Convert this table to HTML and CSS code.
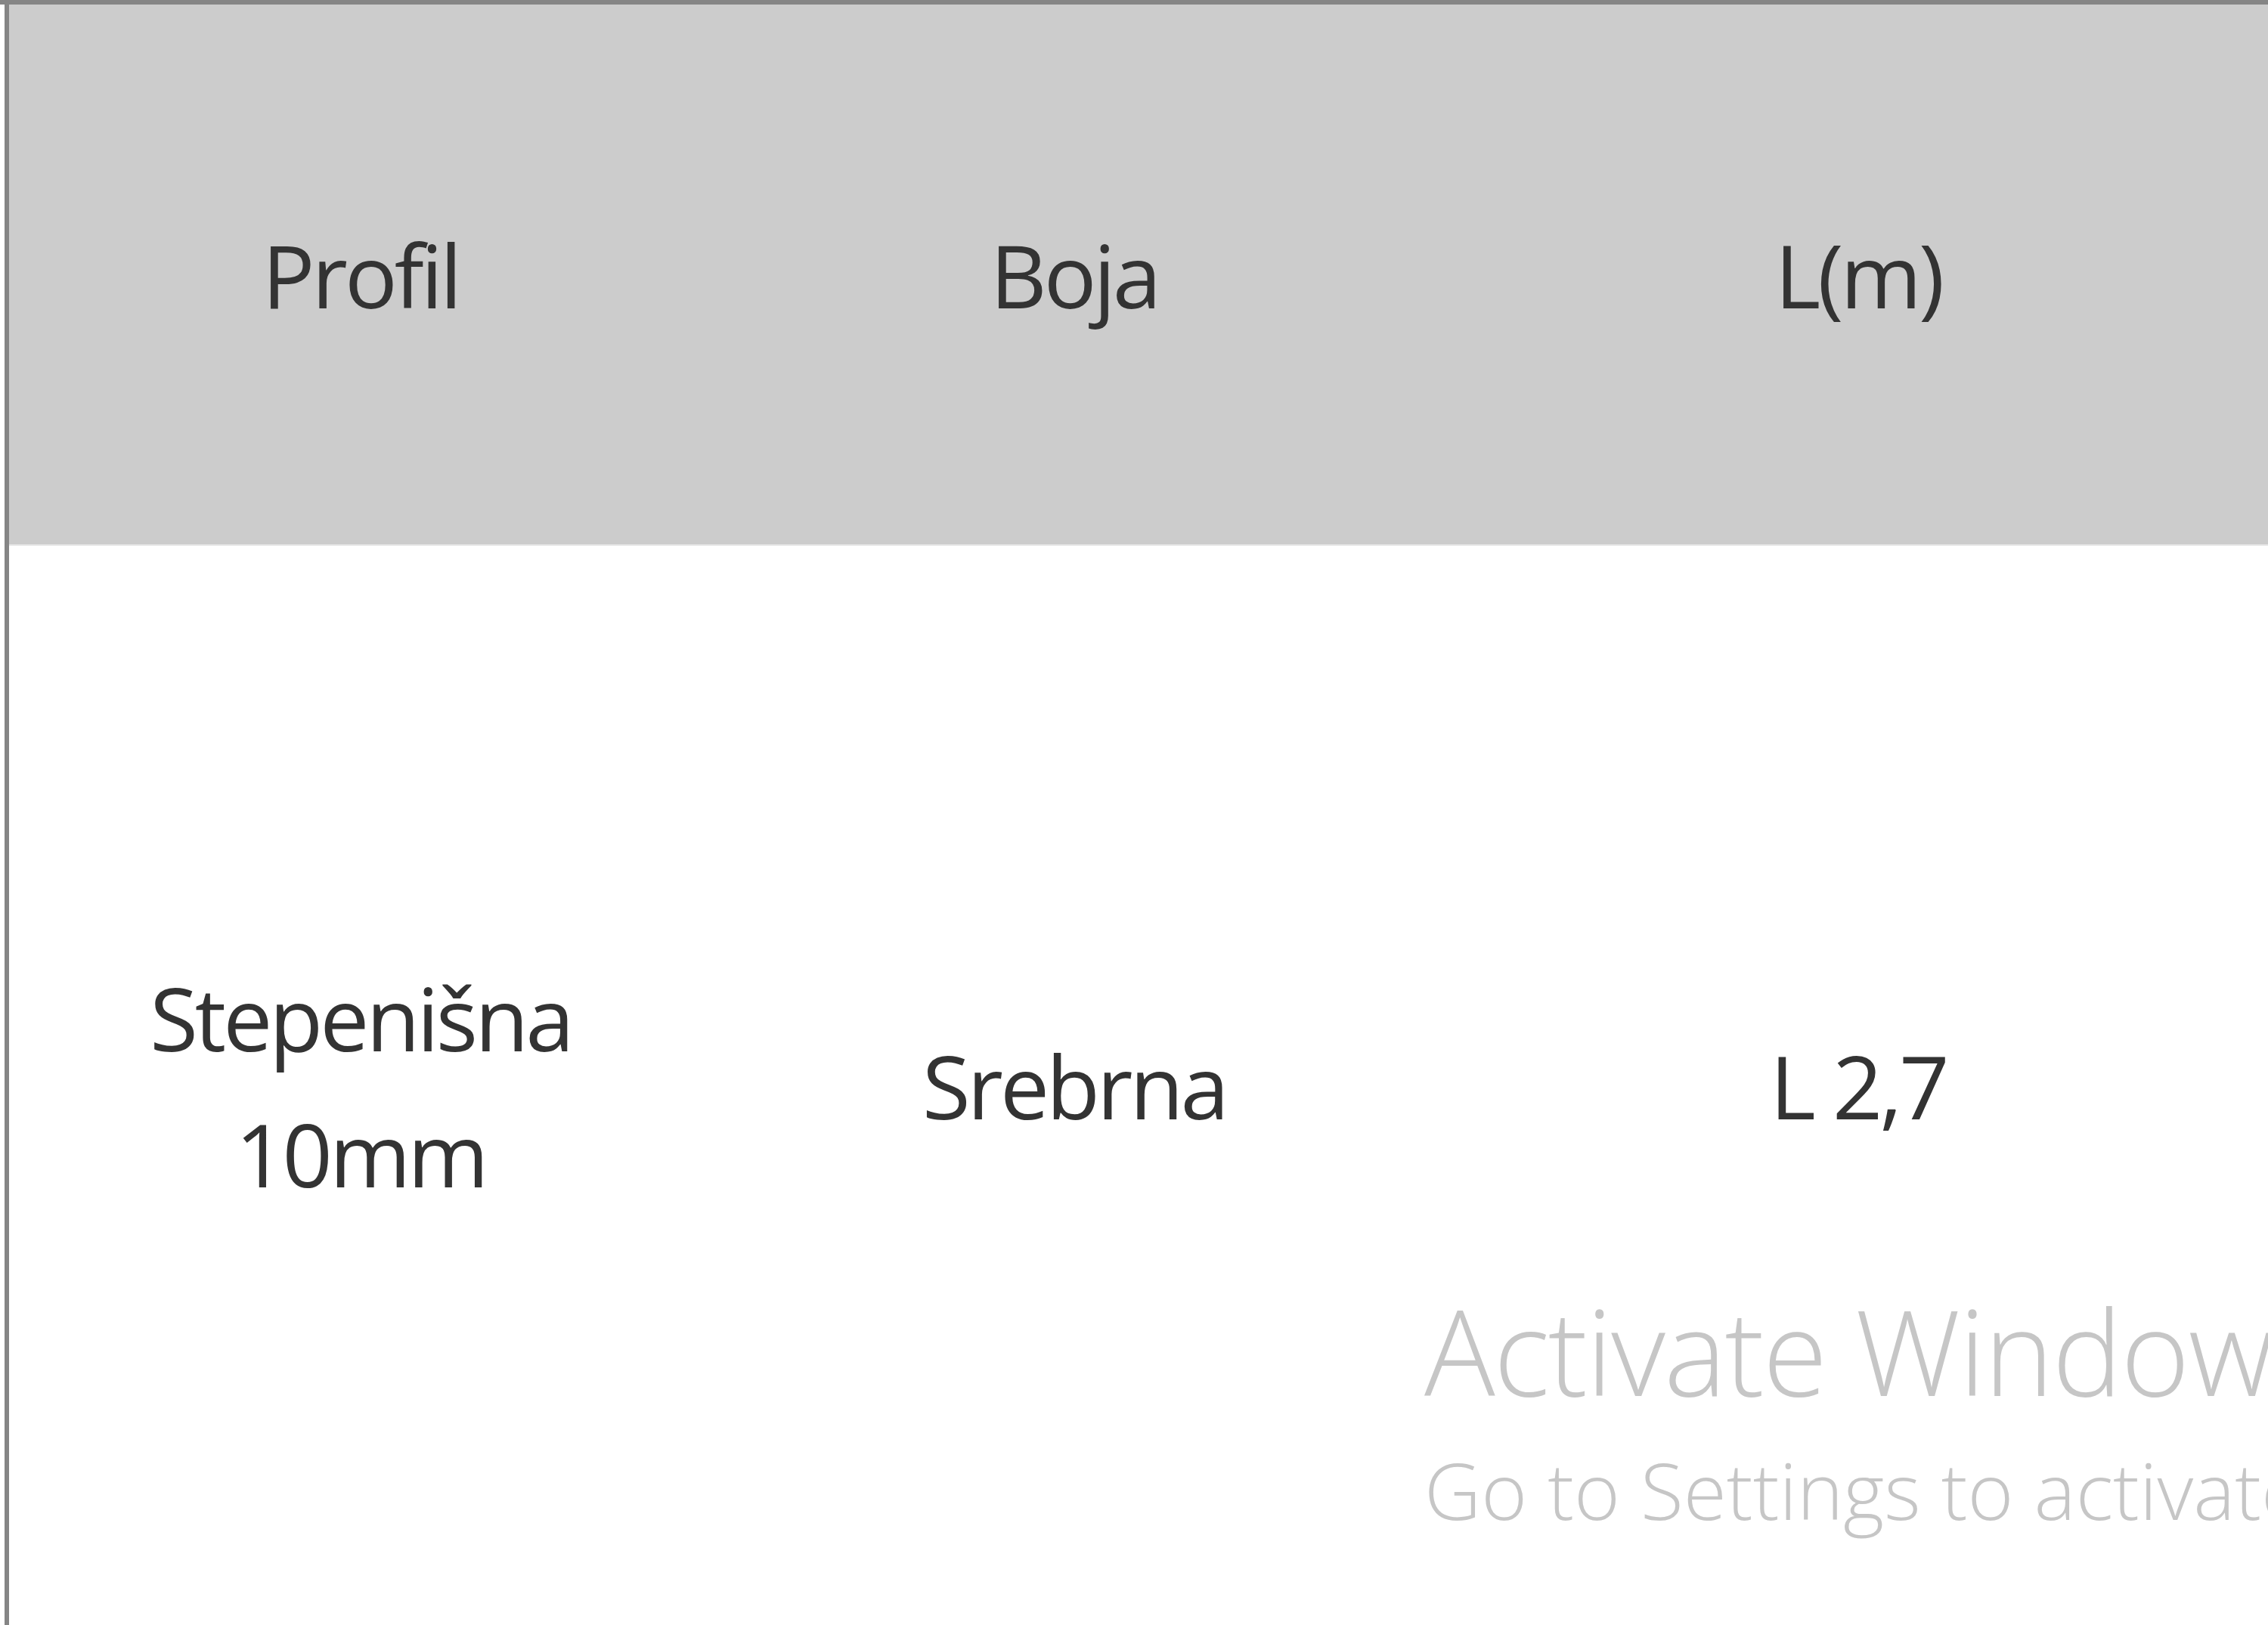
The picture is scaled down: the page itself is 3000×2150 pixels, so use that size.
FILE: index.html
```html
<!DOCTYPE html>
<html lang="sr">
<head>
    <meta charset="UTF-8">
    <meta name="viewport" content="width=device-width, initial-scale=1.0">
    <title>Profili</title>
    <link rel="stylesheet" href="styles.css">
</head>
<body>
    <div class="screen">
        <div class="table">
            <div class="row head">
                <div class="cell">Profil</div>
                <div class="cell">Boja</div>
                <div class="cell">L(m)</div>
            </div>
            <div class="row body-row">
                <div class="cell">Stepenišna 10mm</div>
                <div class="cell">Srebrna</div>
                <div class="cell">L 2,7</div>
            </div>
        </div>
    </div>

    <div class="watermark">
        <div class="wm-title">Activate Windows</div>
        <div class="wm-sub">Go to Settings to activate Windows.</div>
    </div>
</body>
</html>
```

FILE: styles.css
```css
html, body {
    margin: 0;
    height: 100%;
}
body {
    font-family: "Open Sans", "Noto Sans", sans-serif;
    font-variant-ligatures: none;
    font-feature-settings: "liga" 0, "clig" 0, "dlig" 0;
    background-color: #fff;
    color: #333;
    overflow: hidden;
    position: relative;
}
.screen {
    border-top: 6px solid #858585;
    height: 2144px;
}
.table {
    margin-left: 6px;
    border-left: 6px solid #858585;
    height: 100%;
    display: flex;
    flex-direction: column;
    width: 3200px;
}
.row {
    display: grid;
    grid-template-columns: 930px 958px 1116px;
}
.head {
    height: 714px;
    background-color: #cccccc;
    border-bottom: 2px solid #e3e3e3;
}
.body-row {
    flex: 1;
}
.cell {
    display: flex;
    align-items: center;
    justify-content: center;
    text-align: center;
    padding: 0 100px;
    font-size: 116px;
    line-height: 180px;
    letter-spacing: -4px;
}
.watermark {
    position: absolute;
    left: 1884px;
    top: 1697px;
    color: #c6c6c6;
    font-weight: 300;
    white-space: nowrap;
}
.wm-title {
    font-size: 156px;
    line-height: 180px;
    letter-spacing: -2px;
}
.wm-sub {
    font-size: 104px;
    line-height: 187px;
}
```
